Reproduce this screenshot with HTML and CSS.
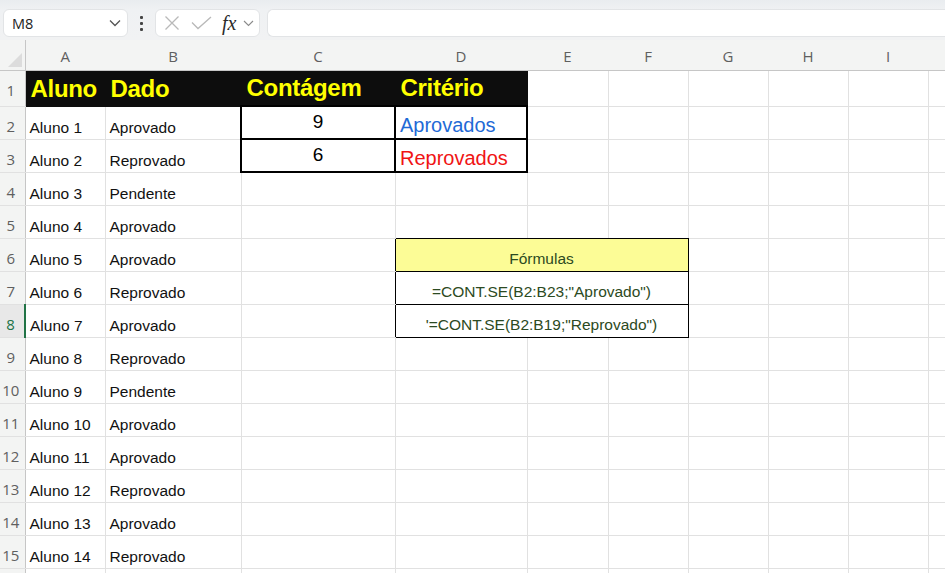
FILE: index.html
```html
<!DOCTYPE html>
<html lang="pt">
<head>
    <meta charset="UTF-8">
    <title>Planilha - CONT.SE</title>
    <link rel="stylesheet" href="styles.css">
</head>
<body>
    <div class="toolbar">
        <div class="name-box">
            <span>M8</span>
            <svg class="chev" width="12" height="8" viewBox="0 0 12 8"><path d="M1 1.5 L6 6.5 L11 1.5" fill="none" stroke="#555" stroke-width="1.3"/></svg>
        </div>
        <div class="more-dots"><i></i><i></i><i></i></div>
        <div class="fx-box">
            <svg width="16" height="16" viewBox="0 0 16 16"><path d="M1.5 1.5 L14.5 14.5 M14.5 1.5 L1.5 14.5" stroke="#b9b9b9" stroke-width="1.3"/></svg>
            <svg width="21" height="14" viewBox="0 0 21 14"><path d="M1 6.5 L7 12.5 L20 1" fill="none" stroke="#b9b9b9" stroke-width="1.3"/></svg>
            <span class="fx">fx</span>
            <svg width="11" height="7" viewBox="0 0 11 7"><path d="M1 1 L5.5 5.5 L10 1" fill="none" stroke="#8a8a8a" stroke-width="1.1"/></svg>
        </div>
        <div class="formula-input"></div>
    </div>

    <table class="sheet">
        <colgroup>
            <col class="c-head"><col class="c-a"><col class="c-b"><col class="c-c"><col class="c-d">
            <col class="c-e"><col class="c-std"><col class="c-std"><col class="c-std"><col class="c-std"><col class="c-std">
        </colgroup>
        <thead>
            <tr>
                <th class="corner"><span class="tri"></span></th>
                <th class="col-head">A</th>
                <th class="col-head">B</th>
                <th class="col-head">C</th>
                <th class="col-head">D</th>
                <th class="col-head">E</th>
                <th class="col-head">F</th>
                <th class="col-head">G</th>
                <th class="col-head">H</th>
                <th class="col-head">I</th>
                <th class="col-head"></th>
            </tr>
        </thead>
        <tbody>
            <tr class="row-title">
                <th class="row-head">1</th>
                <td class="title">Aluno</td>
                <td class="title">Dado</td>
                <td class="title">Contágem</td>
                <td class="title">Critério</td>
                <td></td><td></td><td></td><td></td><td></td><td></td>
            </tr>
            <tr>
                <th class="row-head">2</th>
                <td>Aluno 1</td>
                <td>Aprovado</td>
                <td class="box2 count">9</td>
                <td class="box2 crit approved">Aprovados</td>
                <td></td><td></td><td></td><td></td><td></td><td></td>
            </tr>
            <tr>
                <th class="row-head">3</th>
                <td>Aluno 2</td>
                <td>Reprovado</td>
                <td class="box2 count">6</td>
                <td class="box2 crit failed">Reprovados</td>
                <td></td><td></td><td></td><td></td><td></td><td></td>
            </tr>
            <tr>
                <th class="row-head">4</th>
                <td>Aluno 3</td>
                <td>Pendente</td>
                <td></td><td></td><td></td><td></td><td></td><td></td><td></td><td></td>
            </tr>
            <tr>
                <th class="row-head">5</th>
                <td>Aluno 4</td>
                <td>Aprovado</td>
                <td></td>
                <td class="above-box"></td><td class="above-box"></td><td class="above-box"></td>
                <td></td><td></td><td></td><td></td>
            </tr>
            <tr>
                <th class="row-head">6</th>
                <td>Aluno 5</td>
                <td>Aprovado</td>
                <td class="left-of-box"></td>
                <td class="formula formula-title" colspan="3">Fórmulas</td>
                <td></td><td></td><td></td><td></td>
            </tr>
            <tr>
                <th class="row-head">7</th>
                <td>Aluno 6</td>
                <td>Reprovado</td>
                <td class="left-of-box"></td>
                <td class="formula" colspan="3">=CONT.SE(B2:B23;"Aprovado")</td>
                <td></td><td></td><td></td><td></td>
            </tr>
            <tr>
                <th class="row-head current">8</th>
                <td>Aluno 7</td>
                <td>Aprovado</td>
                <td class="left-of-box"></td>
                <td class="formula" colspan="3">'=CONT.SE(B2:B19;"Reprovado")</td>
                <td></td><td></td><td></td><td></td>
            </tr>
            <tr>
                <th class="row-head">9</th>
                <td>Aluno 8</td>
                <td>Reprovado</td>
                <td></td><td></td><td></td><td></td><td></td><td></td><td></td><td></td>
            </tr>
            <tr>
                <th class="row-head">10</th>
                <td>Aluno 9</td>
                <td>Pendente</td>
                <td></td><td></td><td></td><td></td><td></td><td></td><td></td><td></td>
            </tr>
            <tr>
                <th class="row-head">11</th>
                <td>Aluno 10</td>
                <td>Aprovado</td>
                <td></td><td></td><td></td><td></td><td></td><td></td><td></td><td></td>
            </tr>
            <tr>
                <th class="row-head">12</th>
                <td>Aluno 11</td>
                <td>Aprovado</td>
                <td></td><td></td><td></td><td></td><td></td><td></td><td></td><td></td>
            </tr>
            <tr>
                <th class="row-head">13</th>
                <td>Aluno 12</td>
                <td>Reprovado</td>
                <td></td><td></td><td></td><td></td><td></td><td></td><td></td><td></td>
            </tr>
            <tr>
                <th class="row-head">14</th>
                <td>Aluno 13</td>
                <td>Aprovado</td>
                <td></td><td></td><td></td><td></td><td></td><td></td><td></td><td></td>
            </tr>
            <tr>
                <th class="row-head">15</th>
                <td>Aluno 14</td>
                <td>Reprovado</td>
                <td></td><td></td><td></td><td></td><td></td><td></td><td></td><td></td>
            </tr>
            <tr>
                <th class="row-head"></th>
                <td></td><td></td><td></td><td></td><td></td><td></td><td></td><td></td><td></td><td></td>
            </tr>
        </tbody>
    </table>
</body>
</html>
```

FILE: styles.css
```css
:root {
    --grid: #e1e1e1;
    --head-bg: #f3f4f3;
    --head-line: #c6c6c6;
    --excel-green: #217346;
}

* {
    margin: 0;
    padding: 0;
    box-sizing: border-box;
}

html, body {
    overflow: hidden;
}

body {
    background: #fff;
    font-family: 'Liberation Sans', Arial, sans-serif;
    color: #111;
}

/* formula bar */
.toolbar {
    height: 40px;
    display: flex;
    align-items: flex-start;
    padding: 9px 0 0 3px;
    background: linear-gradient(#e9ecef 0, #eff1f3 9px, #f1f2f3 100%);
}

.name-box {
    width: 125px;
    height: 28px;
    background: #fff;
    border: 1px solid #e2e4e6;
    border-radius: 6px;
    display: flex;
    align-items: center;
    justify-content: space-between;
    padding: 0 6px 0 8px;
    font-family: 'Open Sans', sans-serif;
    font-size: 14.5px;
    color: #222;
}

.more-dots {
    width: 27px;
    height: 28px;
    display: flex;
    flex-direction: column;
    align-items: center;
    justify-content: center;
    gap: 3px;
}

.more-dots i {
    width: 3px;
    height: 3px;
    background: #444;
    border-radius: 1px;
}

.fx-box {
    width: 105px;
    height: 28px;
    background: #fff;
    border: 1px solid #e2e4e6;
    border-radius: 6px;
    display: flex;
    align-items: center;
    padding: 0 3px 0 8px;
}

.fx-box svg:first-child {
    margin-right: 11px;
}

.fx-box svg:nth-child(2) {
    margin-right: 10px;
}

.fx {
    font-family: 'Liberation Serif', serif;
    font-style: italic;
    font-size: 20px;
    color: #2b2b2b;
    margin-right: 7px;
    line-height: 1;
}

.formula-input {
    flex: 1;
    height: 28px;
    margin-left: 7px;
    background: #fff;
    border: 1px solid #e2e4e6;
    border-right: none;
    border-radius: 6px 0 0 6px;
}

/* sheet grid */
.sheet {
    border-collapse: collapse;
    table-layout: fixed;
    width: 1008px;
    font-size: 15.5px;
}

.c-head { width: 25px; }
.c-a { width: 80px; }
.c-b { width: 136px; }
.c-c { width: 154px; }
.c-d { width: 132px; }
.c-e { width: 81px; }
.c-std { width: 80px; }

.sheet th {
    font-weight: normal;
    font-family: 'Open Sans', sans-serif;
    color: #5f5f5f;
    background: var(--head-bg);
}

.corner {
    height: 30px;
    position: relative;
    border-bottom: 1px solid var(--head-line);
    border-right: 1px solid var(--head-line);
}

.tri {
    position: absolute;
    right: 3px;
    bottom: 3px;
    width: 0;
    height: 0;
    border-left: 14px solid transparent;
    border-bottom: 14px solid #dcdcdc;
}

.col-head {
    height: 30px;
    font-size: 15px;
    border-bottom: 1px solid var(--head-line);
    background: var(--head-bg) linear-gradient(#d6d6d6, #d6d6d6) right bottom / 1px 15px no-repeat;
    padding-top: 3px;
}

.row-head {
    font-size: 15px;
    text-align: center;
    vertical-align: bottom;
    padding: 0 3px 3px 0;
    border-right: 1px solid var(--head-line);
    border-bottom: 1px solid var(--grid);
}

.row-head.current {
    color: var(--excel-green);
    background: #e8e8e8;
    border-right: 2px solid var(--excel-green);
}

.sheet td {
    height: 33px;
    border: 1px solid var(--grid);
    padding: 0 4px 2px;
    vertical-align: bottom;
    white-space: nowrap;
    overflow: hidden;
}

.row-title .row-head {
    vertical-align: middle;
    padding-bottom: 0;
    padding-top: 4px;
}

.sheet td.title {
    height: 36px;
    background: #0d0d0d;
    border-color: #0d0d0d;
    color: #ffff00;
    font-weight: bold;
    font-size: 24px;
    letter-spacing: -0.3px;
    vertical-align: middle;
    padding: 1px 5px 0;
}

.sheet td.box2 {
    border: 2px solid #000;
}

.count {
    text-align: center;
    font-size: 19px;
    color: #000;
    vertical-align: middle !important;
}

.crit {
    font-size: 20px;
    padding-bottom: 1px !important;
}

.approved { color: #1f6ad6; }
.failed { color: #f01414; }

.sheet td.above-box {
    border-bottom: 1px solid #000;
}

.sheet td.left-of-box {
    border-right: 1px solid #000;
}

.sheet td.formula {
    border: 1px solid #000;
    text-align: center;
    font-size: 15.5px;
    color: #2c4a22;
    padding-bottom: 3px;
}

.formula-title {
    background: #fcfc96;
}
```
